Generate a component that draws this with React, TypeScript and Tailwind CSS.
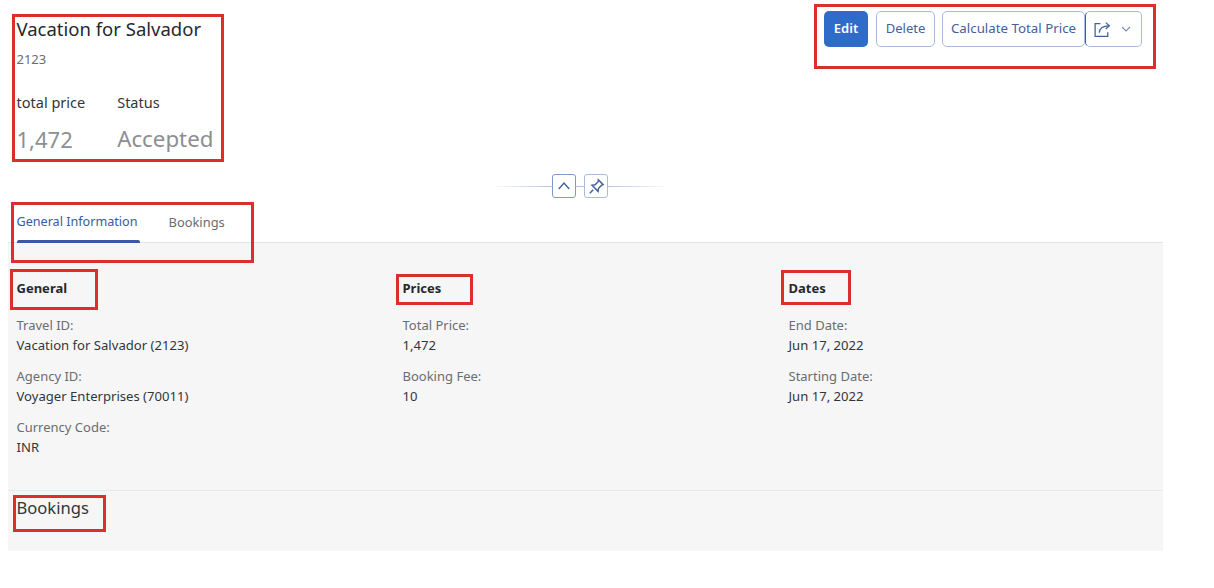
import React from "react";

const font = { fontFamily: '"Noto Sans", "Open Sans", sans-serif' };

const columns = [
  {
    title: "General",
    fields: [
      { label: "Travel ID:", value: "Vacation for Salvador (2123)" },
      { label: "Agency ID:", value: "Voyager Enterprises (70011)" },
      { label: "Currency Code:", value: "INR" },
    ],
  },
  {
    title: "Prices",
    fields: [
      { label: "Total Price:", value: "1,472" },
      { label: "Booking Fee:", value: "10" },
    ],
  },
  {
    title: "Dates",
    fields: [
      { label: "End Date:", value: "Jun 17, 2022" },
      { label: "Starting Date:", value: "Jun 17, 2022" },
    ],
  },
];

// red annotation boxes drawn over the screenshot
const marks = [
  "left-[12px] top-[14px] w-[212px] h-[148px]",
  "left-[814px] top-[4px] w-[342px] h-[65px]",
  "left-[11px] top-[202px] w-[243px] h-[61px]",
  "left-[10px] top-[269px] w-[88px] h-[41px]",
  "left-[396px] top-[274px] w-[77px] h-[31px]",
  "left-[781px] top-[270px] w-[70px] h-[35px]",
  "left-[13px] top-[495px] w-[93px] h-[37px]",
];

function OutlineButton({ children, className = "" }: { children: React.ReactNode; className?: string }) {
  return (
    <button className={`h-[36px] rounded-[5px] border border-[#a9bcdc] bg-white text-[#44609c] flex items-center justify-center ${className}`}>
      {children}
    </button>
  );
}

export default function App() {
  return (
    <div className="relative w-[1214px] h-[588px] overflow-hidden bg-white" style={font}>
      <div className="flex items-start justify-between w-[1142px] h-[170px] pl-[16.5px]">
        <div>
          <h1 className="mt-[17px] text-[18.5px] leading-[24px] text-[#24292f]">Vacation for Salvador</h1>
          <div className="mt-[10px] text-[13px] leading-[16px] text-[#6a6d70]">2123</div>
          <div className="mt-[26px] flex gap-[32px]">
            <div>
              <div className="text-[14.5px] leading-[18px] text-[#32363a]">total price</div>
              <div className="mt-[13px] text-[22px] leading-[30px] text-[#8c8f92]">1,472</div>
            </div>
            <div>
              <div className="text-[14.5px] leading-[18px] text-[#32363a]">Status</div>
              <div className="mt-[13px] text-[22.3px] leading-[30px] text-[#8c8f92]">Accepted</div>
            </div>
          </div>
        </div>
        <div className="mt-[11px] flex items-center">
          <button className="h-[36px] w-[44px] rounded-[5px] bg-[#2f6bc9] text-[13px] font-semibold text-white">Edit</button>
          <OutlineButton className="ml-[8px] w-[59px] text-[13px]">Delete</OutlineButton>
          <OutlineButton className="ml-[7px] w-[143px] text-[13.3px]">Calculate Total Price</OutlineButton>
          <OutlineButton className="w-[57px] gap-[9px] pr-[3px] border-l-[#44609c]">
            <svg width="19" height="19" viewBox="0 0 18 18" fill="none" stroke="#44609c" strokeWidth="1.2">
              <path d="M7 3.5H2v12h12v-4" />
              <path d="M6 12c0-4 3-6.5 9-6.5" />
              <path d="M12 2.5l3.5 3-3.5 3" />
            </svg>
            <svg width="10" height="10" viewBox="0 0 10 10" fill="none" stroke="#7d8fb0" strokeWidth="1.1">
              <path d="M1 3l4 4 4-4" />
            </svg>
          </OutlineButton>
        </div>
      </div>

      <div className="flex items-center justify-center w-[176px] ml-[492px] h-[32px]">
        <div className="flex-1 h-px bg-gradient-to-r from-white to-[#b3c3de]" />
        <button className="w-[24px] h-[24px] shrink-0 rounded-[3px] border border-[#7d9ac8] bg-white flex items-center justify-center">
          <svg width="14" height="14" viewBox="0 0 12 12" fill="none" stroke="#44609c" strokeWidth="1.2">
            <path d="M1.5 8.5L6 3.5l4.5 5" />
          </svg>
        </button>
        <div className="w-[8px] h-px bg-[#b3c3de]" />
        <button className="w-[24px] h-[24px] shrink-0 rounded-[3px] border border-[#a9bcdc] bg-white flex items-center justify-center">
          <svg width="17" height="17" viewBox="0 0 14 14" fill="none" stroke="#44609c" strokeWidth="1.2">
            <path d="M8.5 1.5l4 4-1.2.4-2.6 2.6-.4 2.5-5-5 2.5-.4 2.6-2.6z" />
            <path d="M4.3 9.7L1.5 12.5" />
          </svg>
        </button>
        <div className="flex-1 h-px bg-gradient-to-l from-white to-[#b3c3de]" />
      </div>

      <div className="w-[1155px] ml-[8px]">
        <div className="flex h-[41px] border-b border-[#e4e4e4] shadow-[0_2px_2px_-1px_rgba(0,0,0,0.08)] pl-[8.5px]">
          <div className="relative pt-[11px] w-[123px] whitespace-nowrap text-[12.6px] text-[#38599f]">
            General Information
            <div className="absolute left-0 right-0 bottom-[-1px] h-[3px] rounded-t-[2px] bg-[#38599f]" />
          </div>
          <div className="ml-[29px] pt-[11px] text-[12.9px] text-[#6a6d70]">Bookings</div>
        </div>

        <div className="bg-[#f6f6f7] h-[308px]">
          <div className="grid grid-cols-[386px_386px_1fr] h-[247px] pl-[8.5px] pt-[36px]">
            {columns.map((col) => (
              <div key={col.title}>
                <h2 className="text-[13px] leading-[18px] font-bold text-[#24292f]">{col.title}</h2>
                <div className="mt-[19px] flex flex-col gap-[13px]">
                  {col.fields.map((f) => (
                    <div key={f.label}>
                      <div className="text-[13px] leading-[18px] text-[#6a6d70]">{f.label}</div>
                      <div className="mt-[2px] text-[13.1px] leading-[18px] text-[#32363a]">{f.value}</div>
                    </div>
                  ))}
                </div>
              </div>
            ))}
          </div>
          <div className="border-t border-[#e8e8e8] pl-[8.5px] pt-[4px] text-[16.6px] leading-[26px] text-[#32363a]">Bookings</div>
        </div>
      </div>

      {marks.map((m) => (
        <div key={m} className={`absolute border-[3px] border-[#dc2f2b] ${m}`} />
      ))}
    </div>
  );
}
